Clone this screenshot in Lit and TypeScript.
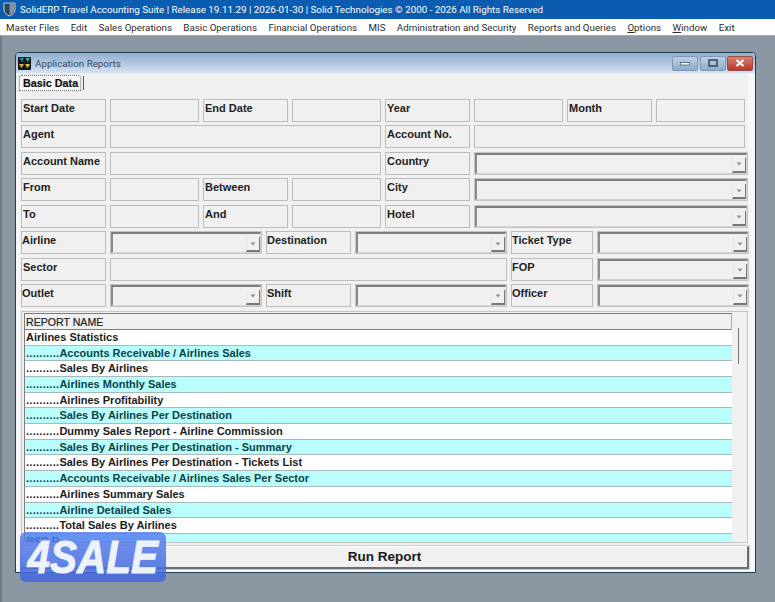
import { LitElement, html, css, svg } from "lit";
import { customElement } from "lit/decorators.js";

type Cell = { k: "l" | "f" | "c"; w: number; t?: string; tight?: boolean };
const L = (w: number, t: string, tight = false): Cell => ({ k: "l", w, t, tight });
const F = (w: number): Cell => ({ k: "f", w });
const C = (w: number): Cell => ({ k: "c", w });

const ROWS: Cell[][] = [
  [L(85, "Start Date"), F(89), L(85, "End Date"), F(89), L(85, "Year"), F(89), L(85, "Month"), F(89)],
  [L(85, "Agent"), F(271), L(85, "Account No."), F(271)],
  [L(85, "Account Name"), F(271), L(85, "Country"), C(274)],
  [L(85, "From"), F(89), L(85, "Between"), F(89), L(85, "City"), C(274)],
  [L(85, "To"), F(89), L(85, "And"), F(89), L(85, "Hotel"), C(274)],
  [L(85, "Airline", true), C(152), L(85, "Destination", true), C(152), L(82, "Ticket Type", true), C(152)],
  [L(85, "Sector"), F(397), L(82, "FOP", true), C(152)],
  [L(85, "Outlet", true), C(152), L(85, "Shift", true), C(152), L(82, "Officer", true), C(152)],
];

const REPORTS: [string, boolean, boolean][] = [
  ["Airlines Statistics", false, false],
  ["Accounts Receivable / Airlines Sales", true, true],
  ["Sales By Airlines", false, true],
  ["Airlines Monthly Sales", true, true],
  ["Airlines Profitability", false, true],
  ["Sales By Airlines Per Destination", true, true],
  ["Dummy Sales Report - Airline Commission", false, true],
  ["Sales By Airlines Per Destination - Summary", true, true],
  ["Sales By Airlines Per Destination - Tickets List", false, true],
  ["Accounts Receivable / Airlines Sales Per Sector", true, true],
  ["Airlines Summary Sales", false, true],
  ["Airline Detailed Sales", true, true],
  ["Total Sales By Airlines", false, true],
  ["BSP R", true, false],
];

const MENU = ["Master Files", "Edit", "Sales Operations", "Basic Operations", "Financial Operations", "MIS", "Administration and Security"];

@customElement("app-root")
export class AppRoot extends LitElement {
  static styles = css`
    :host { display: block; width: 775px; height: 602px; overflow: hidden; position: relative; font-family: "Liberation Sans", Arial, sans-serif; }
    .shell { display: flex; flex-direction: column; height: 602px; }
    .titlebar { height: 19px; background: #0a5cb0; color: #fff; display: flex; align-items: center; gap: 4px; padding-left: 3px; font: 9.8px Roboto, sans-serif; flex: none; white-space: nowrap; }
    .titlebar svg { display: block; }
    .menu { height: 17px; background: #fff; display: flex; align-items: center; gap: 11.4px; padding-left: 6px; font: 9.75px Roboto, sans-serif; color: #2b2b2b; flex: none; white-space: nowrap; border-bottom: 1px solid #a4abb1; box-sizing: border-box; }
    .menu u { text-underline-offset: 1px; }
    .desk { flex: 1; background: #8b98a3; border-left: 2px solid #6f7a83; box-sizing: border-box; padding: 16px 0 0 13px; }
    .win { width: 741px; height: 521px; box-sizing: border-box; border: 1px solid #1d3f49; border-radius: 4px 4px 0 0; background: #f5f7fa; display: flex; flex-direction: column; }
    .wintitle { height: 20px; flex: none; background: linear-gradient(#8fadcf, #d4e1f0); display: flex; align-items: center; padding-left: 2px; gap: 4px; font: 9.8px Roboto, sans-serif; color: #354a63; border-radius: 3px 3px 0 0; }
    .wintitle svg { display: block; }
    .ctrls { margin-left: auto; display: flex; gap: 1.5px; padding-right: 2px; }
    .cbtn { width: 26px; height: 15px; box-sizing: border-box; border: 1px solid #7e97b3; border-radius: 2px; background: linear-gradient(#bcd0e6, #8eabca); display: flex; align-items: center; justify-content: center; }
    .cbtn.x { background: linear-gradient(#d98073, #b83a2c); border-color: #9c4b44; }
    .body { flex: 1; background: #f0f0f0; margin: 0 7px 3px 4px; padding: 0 0 0 1px; display: flex; flex-direction: column; }
    .tabs { height: 18px; margin: 1px 0 1px -2px; flex: none; display: flex; align-items: center; }
    .tab { font: bold 10.8px "Liberation Sans", sans-serif; -webkit-text-stroke: 0.2px #111; color: #111; padding: 0 2px 0 3px; height: 16px; line-height: 15px; box-sizing: border-box; border: 1px dotted #777; border-radius: 3px 3px 0 0; box-shadow: 0 0 0 1px #e4e4e4; background: #f6f6f6; }
    .tabend { width: 1px; height: 14px; background: #555; margin-left: 2px; }
    .form { display: flex; flex-direction: column; gap: 3.43px; margin-top: 6px; }
    .row { display: flex; gap: 4px; height: 23px; }
    .cell { flex: none; box-sizing: border-box; height: 23px; }
    .lab { border: 1px solid #bcbcbc; background: #f0f0f0; font: bold 11px/14px "Liberation Sans", sans-serif; color: #222; padding: 1px 0 0 1px; white-space: nowrap; }
    .lab.tight { padding-left: 0; }
    .fld { border: 1px solid #bcbcbc; background: #f0f0f0; }
    .combo { border-top: 2px solid #7e7e7e; border-left: 2px solid #8a8a8a; border-bottom: 1px solid #d4d4d4; border-right: 1px solid #d4d4d4; background: #f0f0f0; outline: 1px solid #c4c4c4; margin: 0 1px; display: flex; justify-content: flex-end; height: 21px; align-self: center; }
    .arrow { width: 14px; align-self: stretch; box-sizing: border-box; margin-top: 3px; border-right: 1px solid #777; border-bottom: 2px solid #777; border-left: 1px solid #e6e6e6; display: flex; align-items: center; justify-content: center; }
    .arrow svg { display: block; }
    .tablebox { margin-top: 4px; height: 232px; width: 727px; box-sizing: border-box; border: 1px solid #c4c4c4; padding: 1px 1px 0 2px; display: flex; background: #f0f0f0; }
    .grid { width: 708px; flex: none; border-left: 1px solid #7d7d7d; border-top: 1px solid #7d7d7d; overflow: hidden; height: 229px; box-sizing: border-box; }
    .head { height: 16px; box-sizing: border-box; border-bottom: 1px solid #808080; border-right: 1px solid #aaa; font: 10.6px/16px "Liberation Sans", sans-serif; color: #222; padding-left: 1px; -webkit-text-stroke: 0.2px #222; }
    .rep { height: 15.7px; box-sizing: border-box; background: #fff; border-bottom: 1px solid #a9b9b9; font: bold 11px/15.2px "Liberation Sans", sans-serif; color: #1c1c1c; padding-left: 1px; white-space: nowrap; }
    .rep.cy { background: #b9fdfd; color: #0b4447; }
    .dots { letter-spacing: 0.28px; }
    .scroll { flex: 1; position: relative; }
    .thumb { position: absolute; left: 6px; top: 15px; width: 1px; height: 36px; background: #777; }
    .run { margin-top: 3px; height: 23px; width: 728px; box-sizing: border-box; font: bold 13.5px/20px "Liberation Sans", sans-serif; color: #1a1a1a; text-align: center; background: #f0f0f0; border-top: 1px solid #fff; border-left: 1px solid #e8e8e8; border-right: 2px solid #6d6d6d; border-bottom: 2px solid #6d6d6d; outline: 1px solid #cfcfcf; }
    .sale { position: absolute; left: 20px; top: 532px; width: 146px; height: 50px; border-radius: 6px; background: linear-gradient(rgba(84, 124, 240, 0.8), rgba(66, 102, 220, 0.88)); display: flex; align-items: center; justify-content: center; overflow: hidden; }
    .sale span { display: inline-block; color: #eef2fb; font: italic 900 47px/50px "Liberation Sans", sans-serif; -webkit-text-stroke: 1px #eef2fb; transform: scaleX(0.86); white-space: nowrap; }
  `;

  private shield() {
    return svg`<svg width="13" height="15" viewBox="0 0 13 15"><path d="M1 1h11v7c0 3-3 5-5.500 6C4 13 1 11 1 8z" fill="#2e4258" stroke="#c3cfdb" stroke-width="1"/><path d="M6.500 2h4.500v6c0 2-2 4-4.500 5z" fill="#7e94aa"/></svg>`;
  }
  private appIcon() {
    return svg`<svg width="13" height="13" viewBox="0 0 13 13"><rect width="13" height="13" rx="1" fill="#15191c"/><path d="M1 7l2.500 4L6 7z" fill="#e0b21f"/><path d="M7 7l2.500 4L12 7z" fill="#d8c83a"/><path d="M1.500 1l2.500 4 2-4z" fill="#2a8f9d"/><path d="M7.500 1l2 4 2.500-4z" fill="#3fb0a8"/></svg>`;
  }
  private arrow() {
    return svg`<svg width="6" height="4" viewBox="0 0 6 4"><path d="M0.500 0.500h5L3 3.500z" fill="#8f8f8f"/></svg>`;
  }
  private cell(c: Cell) {
    const w = `width:${c.k === "c" ? c.w - 2 : c.w}px`;
    if (c.k === "l") return html`<div class="cell lab ${c.tight ? "tight" : ""}" style=${w}>${c.t}</div>`;
    if (c.k === "f") return html`<div class="cell fld" style=${w}></div>`;
    return html`<div class="cell combo" style=${w}><div class="arrow">${this.arrow()}</div></div>`;
  }

  render() {
    return html`
      <div class="shell">
        <div class="titlebar">${this.shield()}<span>SolidERP Travel Accounting Suite | Release 19.11.29 | 2026-01-30 | Solid Technologies © 2000 - 2026 All Rights Reserved</span></div>
        <div class="menu">
          ${MENU.map((m) => html`<span>${m}</span>`)}
          <span>Reports and Queries</span>
          <span><u>O</u>ptions</span>
          <span><u>W</u>indow</span>
          <span>Exit</span>
        </div>
        <div class="desk">
          <div class="win">
            <div class="wintitle">
              ${this.appIcon()}<span>Application Reports</span>
              <div class="ctrls">
                <div class="cbtn">${svg`<svg width="11" height="5"><rect x="0.500" y="1.500" width="9" height="2.500" fill="#fff" stroke="#4a5a6c" stroke-width="0.800"/></svg>`}</div>
                <div class="cbtn">${svg`<svg width="10" height="8"><rect x="1" y="1" width="8" height="6" fill="none" stroke="#33475c" stroke-width="1.500"/></svg>`}</div>
                <div class="cbtn x">${svg`<svg width="10" height="8"><path d="M1.500 1l7 6M8.500 1l-7 6" stroke="#fff" stroke-width="2"/></svg>`}</div>
              </div>
            </div>
            <div class="body">
              <div class="tabs"><div class="tab">Basic Data</div><div class="tabend"></div></div>
              <div class="form">
                ${ROWS.map((r) => html`<div class="row">${r.map((c) => this.cell(c))}</div>`)}
              </div>
              <div class="tablebox">
                <div class="grid">
                  <div class="head">REPORT NAME</div>
                  ${REPORTS.map(([t, cy, ind]) => html`<div class="rep ${cy ? "cy" : ""}">${ind ? html`<span class="dots">..........</span>` : ""}${t}</div>`)}
                </div>
                <div class="scroll"><div class="thumb"></div></div>
              </div>
              <div class="run">Run Report</div>
            </div>
          </div>
        </div>
      </div>
      <div class="sale"><span>4SALE</span></div>
    `;
  }
}
